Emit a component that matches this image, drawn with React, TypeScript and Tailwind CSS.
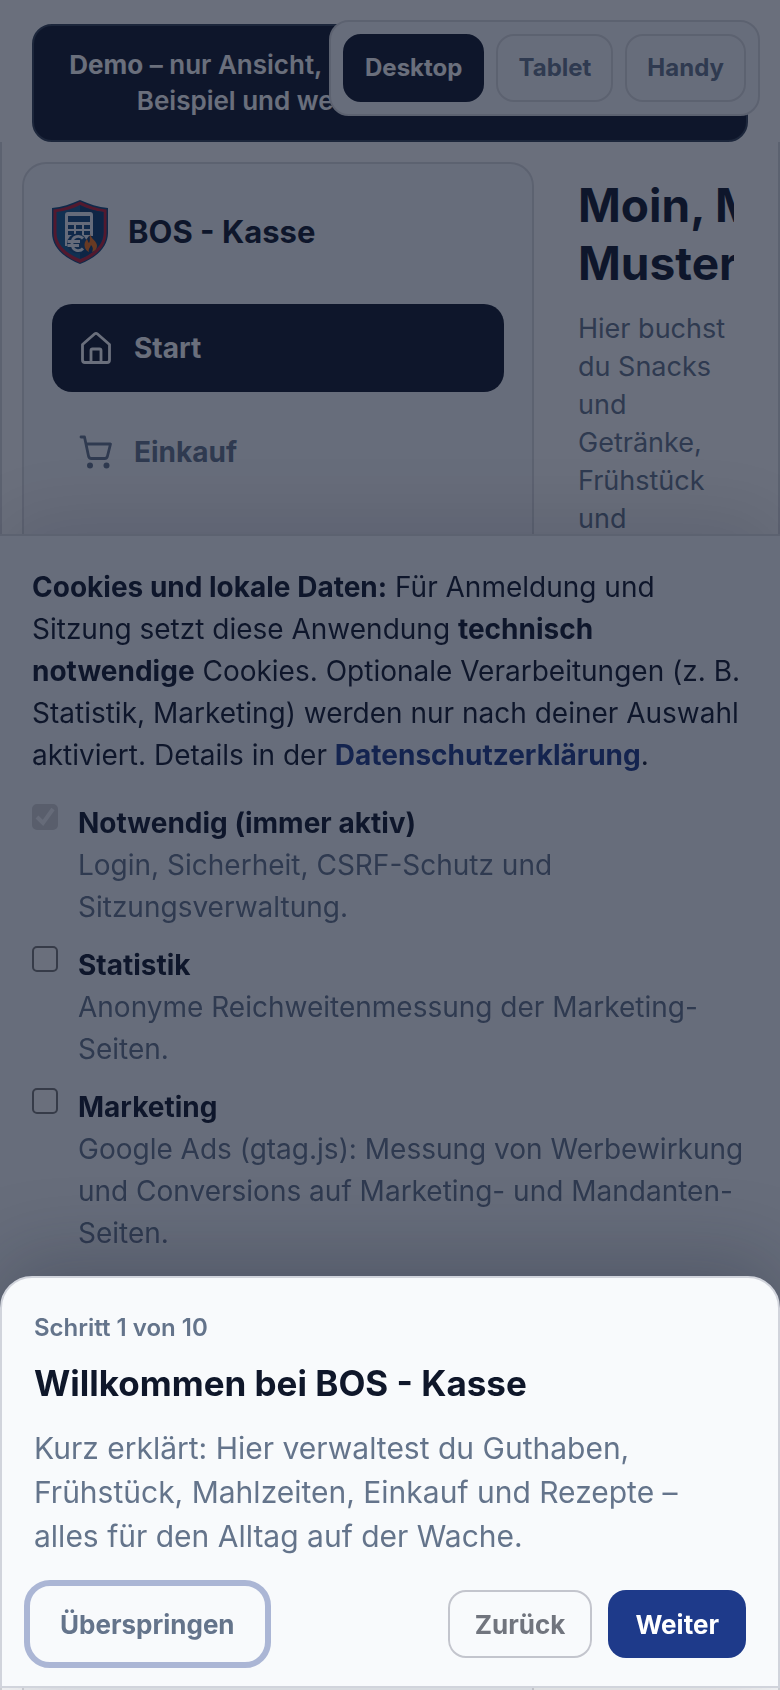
import { useState } from "react";
import type { ReactNode } from "react";

const views = ["Desktop", "Tablet", "Handy"];

const cookieOptions = [
  { id: "necessary", title: "Notwendig (immer aktiv)", text: "Login, Sicherheit, CSRF-Schutz und Sitzungsverwaltung.", locked: true },
  { id: "statistics", title: "Statistik", text: "Anonyme Reichweitenmessung der Marketing-Seiten.", locked: false },
  { id: "marketing", title: "Marketing", text: "Google Ads (gtag.js): Messung von Werbewirkung und Conversions auf Marketing- und Mandanten-Seiten.", locked: false },
];

function Logo() {
  return (
    <svg viewBox="0 0 56 64" className="h-16 w-14 shrink-0" aria-hidden="true">
      <path d="M28 0C19 4 10 7 0 8v25c0 14 12 25 28 31 16-6 28-17 28-31V8C46 7 37 4 28 0Z" fill="#12487c" />
      <path d="M28 1.500C20 5.500 11 8.500 1.500 9.500V33c0 14 11.500 24 26.500 30 15-6 26.500-16 26.500-30V9.500C45 8.500 36 5.500 28 1.500Z" fill="#c01f33" />
      <path d="M28 5C21 8.500 13 11 4.500 12v21c0 11.500 9.500 20.500 23.500 26 14-5.500 23.500-14.500 23.500-26V12C43 11 35 8.500 28 5Z" fill="#17598f" />
      <path d="M28 5c7 3.500 15 6 23.500 7v21c0 11.500-9.500 20.500-23.500 26V5Z" fill="#0e3e70" />
      <path d="M16 12h22a3 3 0 0 1 3 3v21h-4l-3 4-4-4H20l-4 5v5h-3V15a3 3 0 0 1 3-3Z" fill="#f1f5f9" />
      <path d="M16 16h22v6H16zM16 25h6v4h-6zM24 25h6v4h-6zM32 25h6v4h-6zM16 31h6v4h-6zM24 31h6v4h-6zM32 31h6v4h-6z" fill="#14497c" />
      <circle cx="25" cy="43.500" r="10" fill="#14497c" />
      <path d="M31 38.500c-3-3.500-11-3-11 5s8 8.500 11 5M15.500 41.500H28M15.500 45.500H27" fill="none" stroke="#f1f5f9" strokeWidth="2.800" />
      <path d="M38 34c1 5 7 7 7 12 0 3-2 5-5 6 1.500-3 1-5-1-7-1 3-3 4-2 7-5-2-6-9-2-13 1 2 1 3 2 4 2-3 0-6 1-9Z" fill="#f97316" />
    </svg>
  );
}

function HomeIcon() {
  return (
    <svg viewBox="0 0 36 36" className="size-9 shrink-0" fill="none" stroke="currentColor" strokeWidth="2.800" strokeLinecap="round" strokeLinejoin="round" aria-hidden="true">
      <path d="M4.500 14.500 16.500 4a2.300 2.300 0 0 1 3 0l12 10.500V30a2.500 2.500 0 0 1-2.500 2.500H7A2.500 2.500 0 0 1 4.500 30Z" />
      <path d="M13 32V20.500A1.500 1.500 0 0 1 14.500 19h7a1.500 1.500 0 0 1 1.500 1.500V32" />
    </svg>
  );
}

function CartIcon() {
  return (
    <svg viewBox="0 0 36 36" className="size-9 shrink-0" fill="none" stroke="currentColor" strokeWidth="2.800" strokeLinecap="round" strokeLinejoin="round" aria-hidden="true">
      <path d="M3 3h3.500l4 19a3 3 0 0 0 3 2.500h13a3 3 0 0 0 3-2.500l3-12H8" />
      <circle cx="12" cy="31.500" r="3" fill="currentColor" stroke="none" />
      <circle cx="28.500" cy="31.500" r="3" fill="currentColor" stroke="none" />
    </svg>
  );
}

function NavItem({ icon, label, active }: { icon: ReactNode; label: string; active?: boolean }) {
  return (
    <a
      href="#"
      className={
        active
          ? "flex h-[88px] items-center gap-5 rounded-[20px] bg-slate-900 px-[26px] font-bold text-white"
          : "flex h-[88px] items-center gap-5 rounded-[20px] px-[26px] font-bold text-[#64748b]"
      }
    >
      {icon}
      {label}
    </a>
  );
}

function CookieBanner() {
  const [checked, setChecked] = useState<Record<string, boolean>>({ necessary: true });

  return (
    <section
      aria-label="Cookies"
      className="fixed inset-x-0 top-[534px] bottom-0.5 overflow-hidden border-t-2 border-[#dbdce0] bg-[#f8fafc] px-8 pt-[30px] text-[28px] leading-[42px] text-[#0f172a] shadow-[0_-16px_80px_rgba(15,23,42,0.15)]"
    >
      <p>
        <strong className="font-bold">Cookies und lokale Daten:</strong> Für Anmeldung und Sitzung setzt diese Anwendung{" "}
        <strong className="font-bold">technisch notwendige</strong> Cookies. Optionale Verarbeitungen (z.&nbsp;B. Statistik,
        Marketing) werden nur nach deiner Auswahl aktiviert. Details in der{" "}
        <a href="#" className="font-bold text-[#1e3a8a]">Datenschutzerklärung</a>.
      </p>
      <div className="mt-[26px] flex flex-col gap-4">
        {cookieOptions.map((option) => (
          <label key={option.id} htmlFor={option.id} className="flex items-start gap-5">
            <input
              id={option.id}
              type="checkbox"
              disabled={option.locked}
              checked={!!checked[option.id]}
              onChange={(e) => setChecked({ ...checked, [option.id]: e.target.checked })}
              className="peer sr-only"
            />
            <span className="mt-0.5 flex size-[26px] shrink-0 items-center justify-center rounded-[5px] border-2 border-[#767676] bg-white peer-disabled:border-[#d1d2d5] peer-disabled:bg-[#d1d2d5]">
              {checked[option.id] && (
                <svg viewBox="0 0 26 26" className="size-[26px] shrink-0" fill="none" stroke="#f4f5f7" strokeWidth="4" aria-hidden="true">
                  <path d="m5 13 6 6L21 5" />
                </svg>
              )}
            </span>
            <span>
              <strong className="block font-bold">{option.title}</strong>
              <span className="block text-[#64748b]">{option.text}</span>
            </span>
          </label>
        ))}
      </div>
    </section>
  );
}

function TourSheet() {
  return (
    <section
      role="dialog"
      aria-labelledby="tour-title"
      className="fixed inset-x-0 bottom-0.5 rounded-t-[32px] border-2 border-[#d1d4dc] bg-[#f8fafc] px-8 pt-8 pb-7 shadow-[0_-16px_80px_rgba(15,23,42,0.25)]"
    >
      <p className="text-2xl leading-9 font-semibold text-[#64748b]">Schritt 1 von 10</p>
      <h2 id="tour-title" className="mt-3 text-[35px] leading-[50px] font-bold text-[#0f172a]">Willkommen bei BOS - Kasse</h2>
      <p className="mt-[18px] text-[30px] leading-[44px] text-[#64748b]">
        Kurz erklärt: Hier verwaltest du Guthaben, Frühstück, Mahlzeiten, Einkauf und Rezepte – alles für den Alltag auf der
        Wache.
      </p>
      <div className="mt-8 flex items-center gap-4 text-[26px] font-bold">
        <button type="button" className="mr-auto h-[68px] rounded-2xl px-[26px] text-[#64748b] outline-6 outline-offset-4 outline-[#abb6d5]">
          Überspringen
        </button>
        <button type="button" className="h-[68px] rounded-[18px] border-2 border-[#c3c5cd] px-[25px] text-[#71757e]">
          Zurück
        </button>
        <button type="button" className="h-[68px] rounded-[18px] bg-[#1e3a8a] px-[27px] text-white">
          Weiter
        </button>
      </div>
    </section>
  );
}

export default function App() {
  const [view, setView] = useState("Desktop");

  return (
    <div className="flex h-screen flex-col overflow-hidden bg-white font-[Inter,sans-serif] text-[#0f172a]">
      <div className="mx-8 mt-6 rounded-[20px] border-2 border-[#334155] bg-slate-900 px-7 py-[21px] text-center text-[26px] leading-9 font-semibold text-white">
        <strong className="font-bold">Demo</strong> – nur Ansicht, keine Speicherung. Daten sind
        <br />
        Beispiel und werden nicht übernommen.
      </div>

      <div className="fixed top-5 right-5 flex gap-3 rounded-[20px] border-2 border-[#dbdce0] bg-[#f8fafc] p-3 text-2xl font-bold">
        {views.map((name) => (
          <button
            key={name}
            type="button"
            onClick={() => setView(name)}
            className={
              view === name
                ? "h-[68px] rounded-[18px] border-2 border-slate-900 bg-slate-900 px-5 text-white"
                : "h-[68px] rounded-[18px] border-2 border-[#dbdce0] px-5 text-[#64748b]"
            }
          >
            {name}
          </button>
        ))}
      </div>

      <div className="flex min-h-0 flex-1 gap-11 border-x-2 border-[#dbdce0] pt-5 pr-11 pl-5">
        <aside className="w-[512px] shrink-0 rounded-t-3xl border-2 border-b-0 border-[#dbdce0] bg-[#f8fafc] px-7 pt-9">
          <div className="flex items-center gap-5 text-[31px] font-bold">
            <Logo />
            BOS - Kasse
          </div>
          <nav className="mt-10 flex flex-col gap-4 text-[28px]">
            <NavItem icon={<HomeIcon />} label="Start" active />
            <NavItem icon={<CartIcon />} label="Einkauf" />
          </nav>
        </aside>
        <main className="min-w-0 flex-1 overflow-hidden pt-[14px]">
          <h1 className="text-[46px] leading-[58px] font-bold whitespace-nowrap">
            Moin, Max
            <br />
            Mustermann
          </h1>
          <p className="mt-[18px] text-[27px] leading-[38px] text-[#64748b]">
            Hier buchst du Snacks und Getränke, Frühstück und Mahlzeiten.
          </p>
        </main>
      </div>

      <CookieBanner />
      <div className="fixed inset-x-0 top-0 bottom-0.5 bg-slate-900/62" />
      <TourSheet />
    </div>
  );
}
